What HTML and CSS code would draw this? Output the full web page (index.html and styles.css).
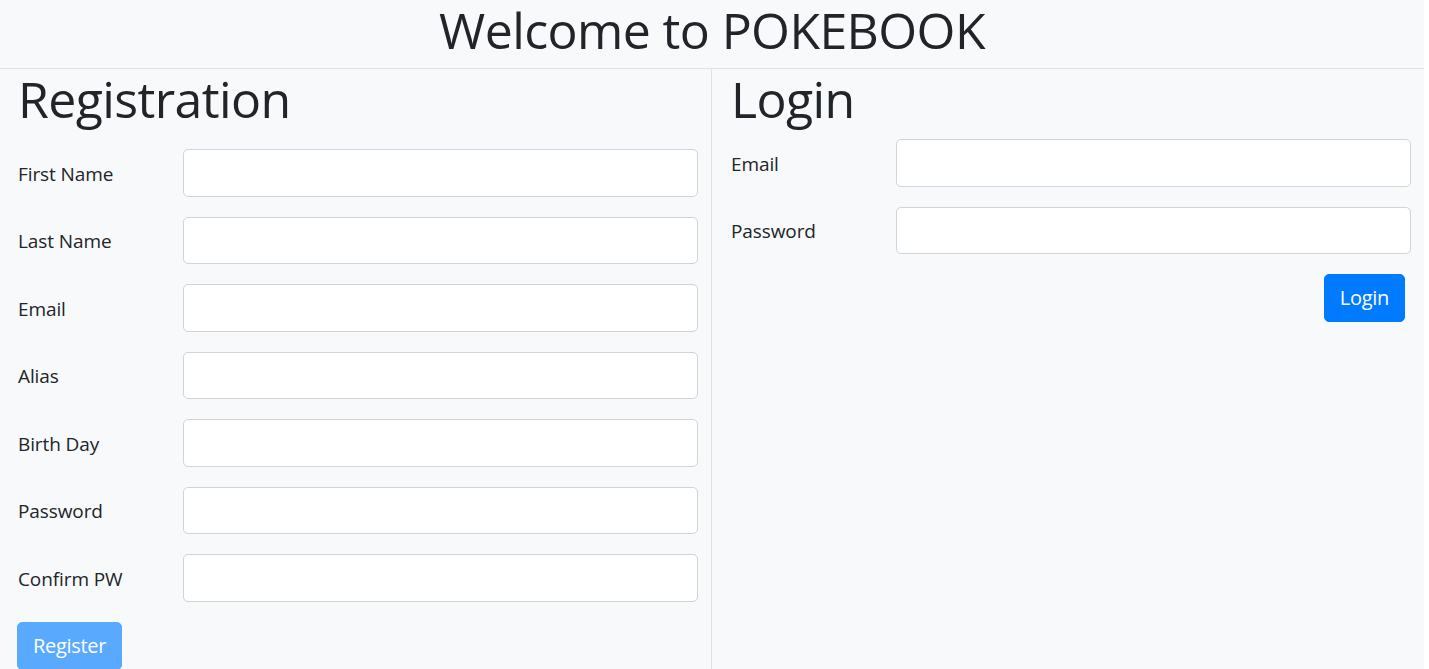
FILE: index.html
```html
<!DOCTYPE html>
<html lang="en">
<head>
<meta charset="utf-8">
<title>POKEBOOK</title>
<link rel="stylesheet" href="styles.css">
</head>
<body>
<div class="page">
  <header class="top">
    <h1 class="title">Welcome to POKEBOOK</h1>
  </header>
  <main class="cols">
    <section class="col col-left">
      <h1 class="heading">Registration</h1>
      <form class="form form-reg">
        <div class="row"><label class="lbl">First Name</label><input class="field" type="text"></div>
        <div class="row"><label class="lbl">Last Name</label><input class="field" type="text"></div>
        <div class="row"><label class="lbl">Email</label><input class="field" type="text"></div>
        <div class="row"><label class="lbl">Alias</label><input class="field" type="text"></div>
        <div class="row"><label class="lbl">Birth Day</label><input class="field" type="text"></div>
        <div class="row"><label class="lbl">Password</label><input class="field" type="password"></div>
        <div class="row"><label class="lbl">Confirm PW</label><input class="field" type="password"></div>
        <div class="actions-left"><button class="btn btn-disabled" type="button">Register</button></div>
      </form>
    </section>
    <section class="col col-right">
      <h1 class="heading">Login</h1>
      <form class="form">
        <div class="row"><label class="lbl">Email</label><input class="field" type="text"></div>
        <div class="row"><label class="lbl">Password</label><input class="field" type="password"></div>
        <div class="actions-right"><button class="btn btn-primary" type="button">Login</button></div>
      </form>
    </section>
  </main>
</div>
</body>
</html>
```

FILE: styles.css
```css
html, body {
  margin: 0;
  padding: 0;
  background: #ffffff;
}
body {
  font-family: "Open Sans", "Noto Sans", sans-serif;
  color: #212529;
  overflow: hidden;
}
.page {
  width: 1424px;
  height: 669px;
  background: #f8f9fa;
  overflow: hidden;
}
.top {
  height: 68px;
  border-bottom: 1px solid #dee2e6;
  text-align: center;
}
.title {
  margin: 0;
  font-size: 50px;
  font-weight: 500;
  line-height: 60px;
  letter-spacing: -0.6px;
}
.cols {
  display: grid;
  grid-template-columns: 712px 712px;
  height: 600px;
}
.col {
  padding: 0 13px 0 19px;
}
.col-left {
  padding-left: 18px;
  border-right: 1px solid #dee2e6;
}
.heading {
  margin: 0 0 10px 0;
  font-size: 50px;
  font-weight: 500;
  line-height: 60px;
  letter-spacing: -0.6px;
}
.form-reg {
  padding-top: 10px;
}
.row {
  display: grid;
  grid-template-columns: 165px 1fr;
  align-items: center;
  margin-bottom: 20px;
}
.lbl {
  font-size: 19px;
  line-height: 30px;
  letter-spacing: -0.1px;
  padding-top: 2px;
}
.field {
  box-sizing: border-box;
  height: 47.5px;
  width: 100%;
  margin: 0;
  border: 1px solid #ced4da;
  border-radius: 5px;
  background: #ffffff;
  font: inherit;
  font-size: 20px;
  padding: 7.5px 15px;
}
.actions-right {
  display: flex;
  justify-content: flex-end;
  padding-right: 6px;
}
.btn {
  font-family: inherit;
  font-size: 20px;
  line-height: 30px;
  letter-spacing: -0.3px;
  padding: 8px 15px;
  border: 1px solid transparent;
  border-radius: 5px;
  color: #ffffff;
}
.btn-primary {
  background: #007bff;
  border-color: #007bff;
}
.btn-disabled {
  background: #59a9ff;
  border-color: #59a9ff;
  margin-left: -1px;
}
```
